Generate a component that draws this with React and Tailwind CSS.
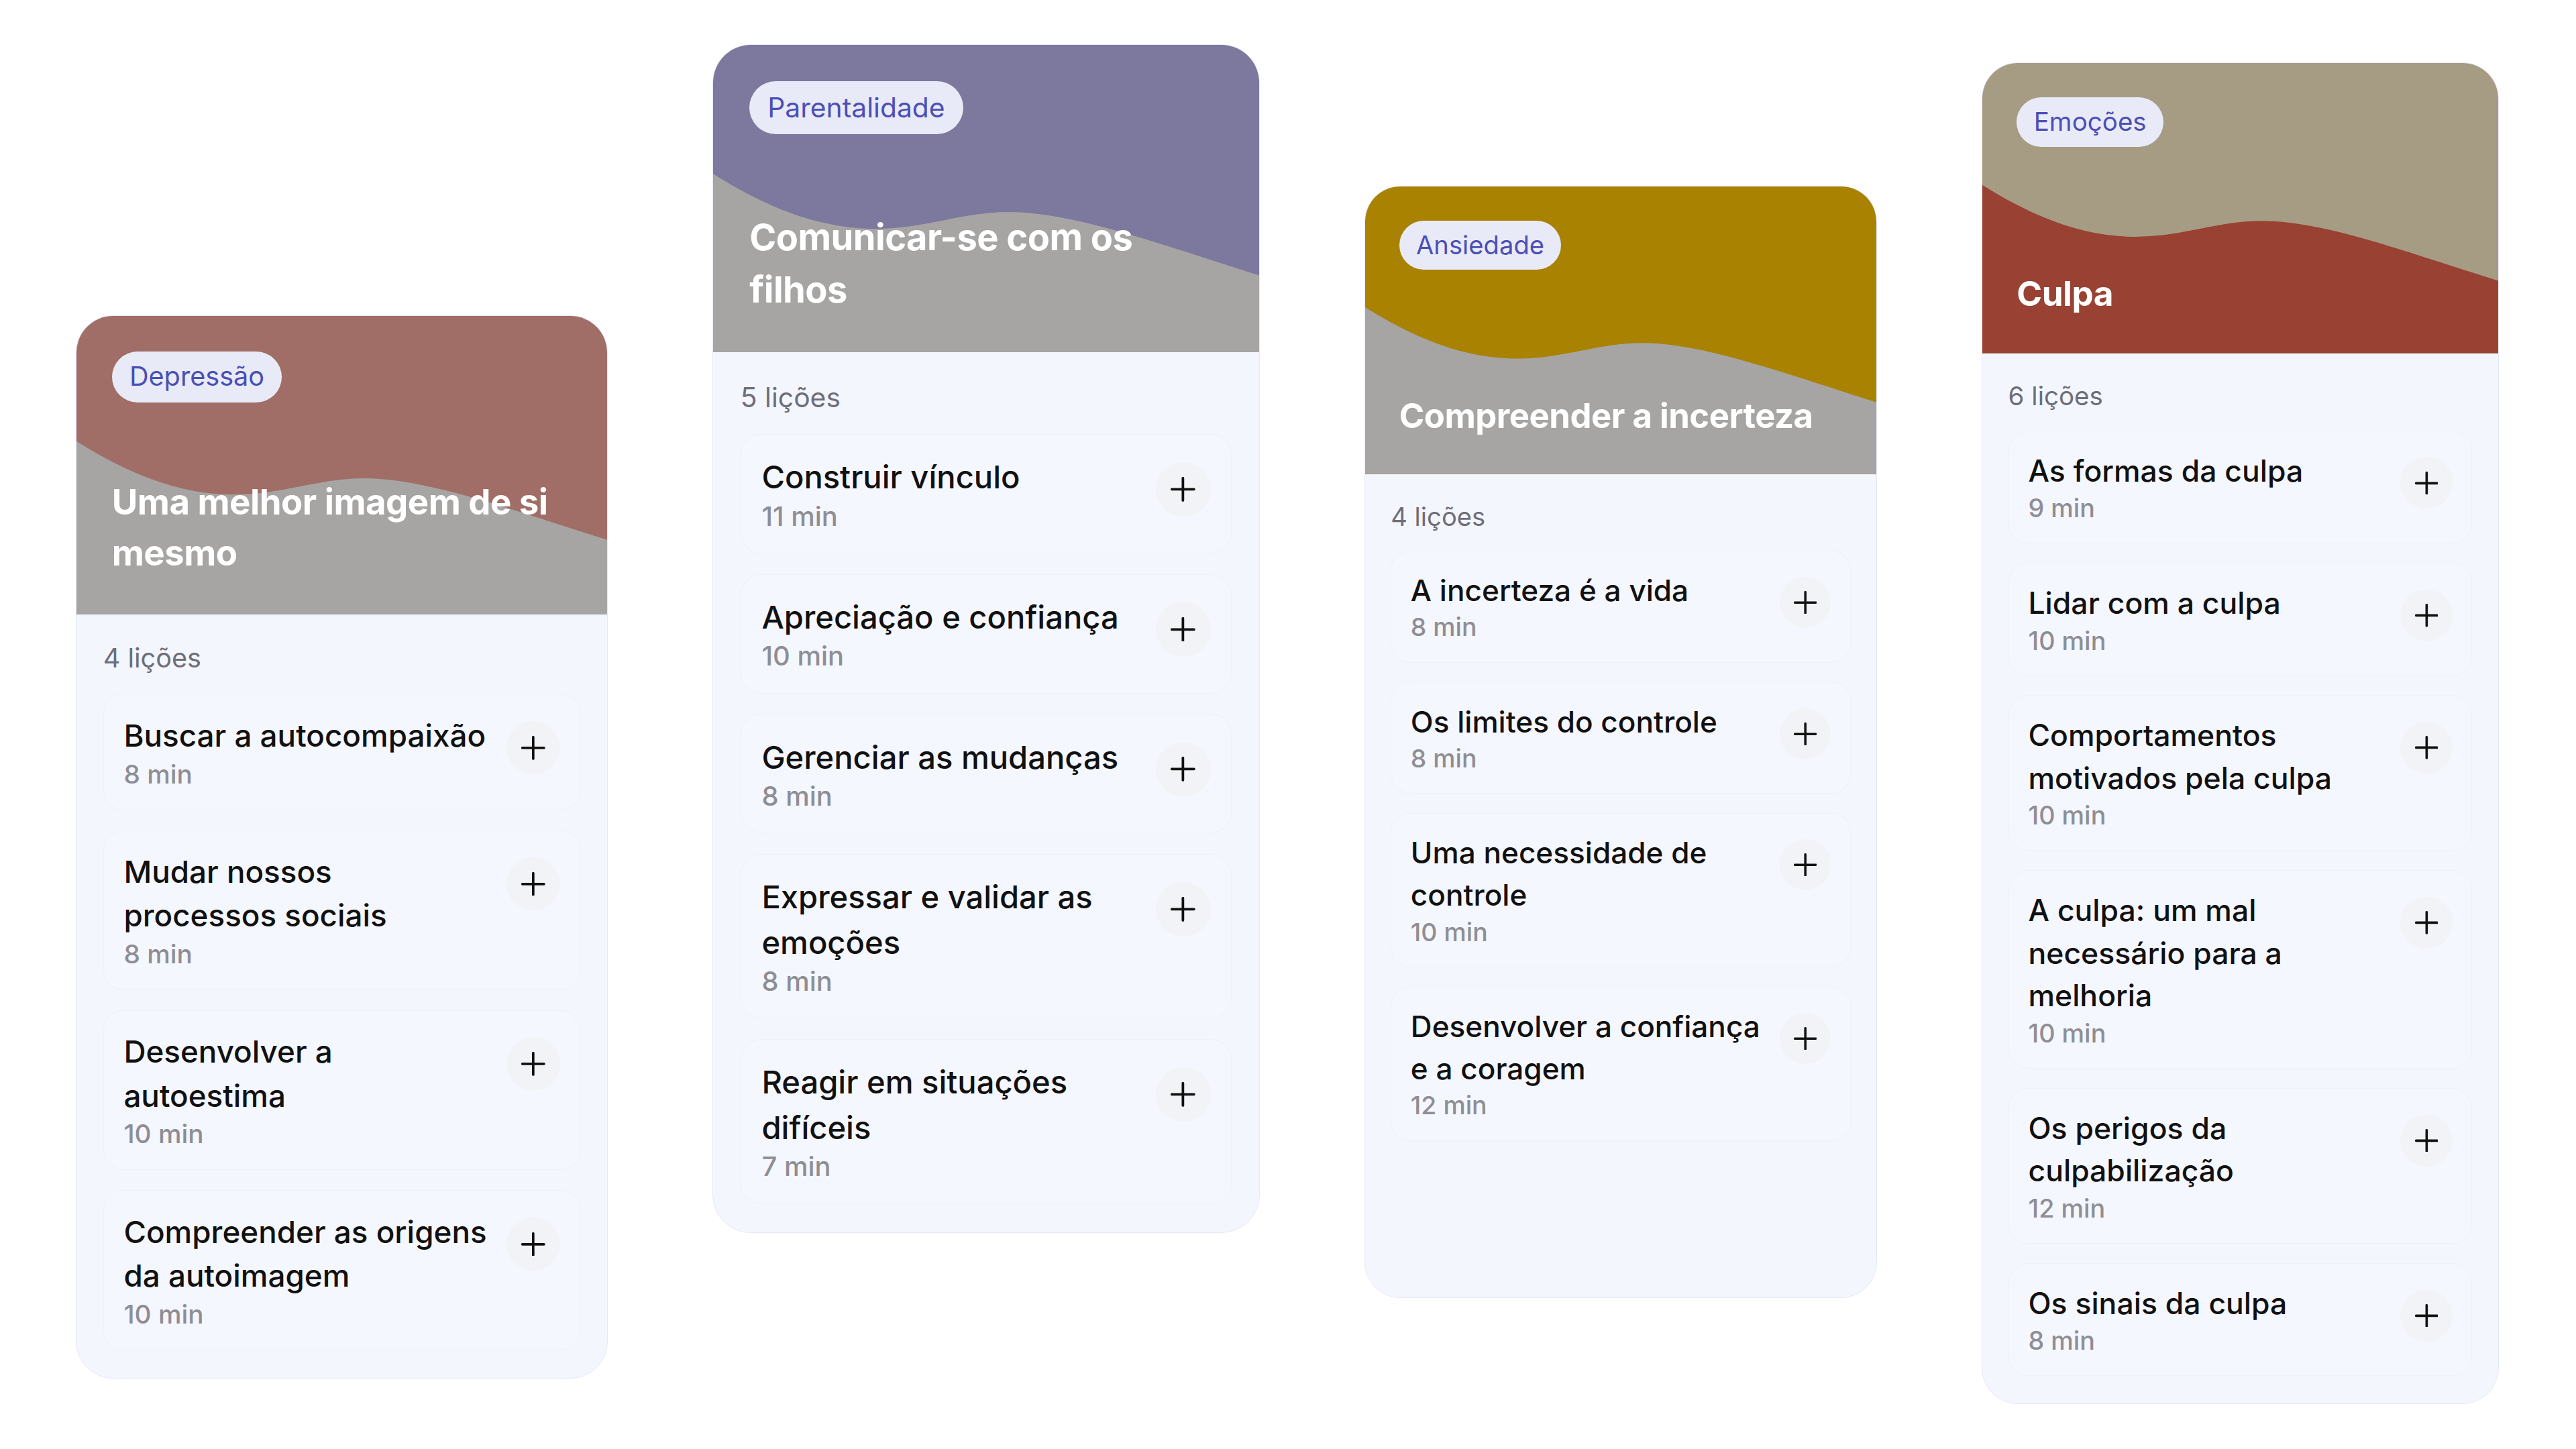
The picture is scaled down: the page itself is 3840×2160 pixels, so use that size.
import React from "react";

const courses = [
  {
    size: "text-[39.65px]",
    offset: "mt-[470px]",
    height: "",
    tag: "Depressão",
    title: ["Uma melhor imagem de si", "mesmo"],
    headerBg: "bg-[#a06e66]",
    wave: "#a6a5a3",
    count: "4 lições",
    lessons: [
      { title: ["Buscar a autocompaixão"], time: "8 min" },
      { title: ["Mudar nossos", "processos sociais"], time: "8 min" },
      { title: ["Desenvolver a", "autoestima"], time: "10 min" },
      { title: ["Compreender as origens", "da autoimagem"], time: "10 min" },
    ],
  },
  {
    size: "text-[40.8px]",
    offset: "mt-[66px]",
    height: "",
    tag: "Parentalidade",
    title: ["Comunicar-se com os", "filhos"],
    headerBg: "bg-[#7c789e]",
    wave: "#a6a5a3",
    count: "5 lições",
    lessons: [
      { title: ["Construir vínculo"], time: "11 min" },
      { title: ["Apreciação e confiança"], time: "10 min" },
      { title: ["Gerenciar as mudanças"], time: "8 min" },
      { title: ["Expressar e validar as", "emoções"], time: "8 min" },
      { title: ["Reagir em situações", "difíceis"], time: "7 min" },
    ],
  },
  {
    size: "text-[38.2px]",
    offset: "mt-[277px]",
    height: "h-[43.4em]",
    tag: "Ansiedade",
    title: ["Compreender a incerteza"],
    headerBg: "bg-[#a88200]",
    wave: "#a6a5a3",
    count: "4 lições",
    lessons: [
      { title: ["A incerteza é a vida"], time: "8 min" },
      { title: ["Os limites do controle"], time: "8 min" },
      { title: ["Uma necessidade de", "controle"], time: "10 min" },
      { title: ["Desenvolver a confiança", "e a coragem"], time: "12 min" },
    ],
  },
  {
    size: "text-[38.55px]",
    offset: "mt-[93px]",
    height: "",
    tag: "Emoções",
    title: ["Culpa"],
    headerBg: "bg-[#a69c84]",
    wave: "#994234",
    count: "6 lições",
    lessons: [
      { title: ["As formas da culpa"], time: "9 min" },
      { title: ["Lidar com a culpa"], time: "10 min" },
      { title: ["Comportamentos", "motivados pela culpa"], time: "10 min" },
      { title: ["A culpa: um mal", "necessário para a", "melhoria"], time: "10 min" },
      { title: ["Os perigos da", "culpabilização"], time: "12 min" },
      { title: ["Os sinais da culpa"], time: "8 min" },
    ],
  },
];

function PlusIcon() {
  return (
    <svg viewBox="0 0 14 14" className="w-[0.9em] h-[0.9em]" fill="none" stroke="#111111" strokeWidth="1.45" strokeLinecap="round">
      <path d="M7 0.7V13.3M0.7 7H13.3" />
    </svg>
  );
}

function Wave({ color }) {
  return (
    <svg className="absolute inset-0 w-full h-full" viewBox="0 0 100 100" preserveAspectRatio="none">
      <path
        d="M0,42 C9,52 18,59 28,59.8 C38,60.5 45,54.5 54,54.4 C66,54.3 82,65 100,75 L100,100 L0,100 Z"
        fill={color}
      />
    </svg>
  );
}

function Lesson({ lesson }) {
  return (
    <div className="flex items-start justify-between rounded-[0.75em] border border-[#eff1f8] bg-[#f5f7fe] px-[0.75em] py-[0.72em]">
      <div className="flex flex-col">
        <div className="text-[1.155em] leading-[1.43] font-medium text-[#111111]">
          {lesson.title.map((line) => (
            <span key={line} className="block whitespace-nowrap">
              {line}
            </span>
          ))}
        </div>
        <div className="text-[0.98em] leading-[1.25] font-medium text-[#8e8e94]">{lesson.time}</div>
      </div>
      <button className="mt-[0.28em] flex h-[2em] w-[2em] shrink-0 items-center justify-center rounded-full bg-[#f2f3f7]">
        <PlusIcon />
      </button>
    </div>
  );
}

function CourseCard({ course }) {
  return (
    <div
      className={`${course.size} ${course.offset} ${course.height} w-[20em] shrink-0 overflow-hidden rounded-[1.4em] border border-[#e6e8f5] bg-[#f4f6fe]`}
    >
      <div className={`relative aspect-video ${course.headerBg}`}>
        <Wave color={course.wave} />
        <div className="relative flex h-full flex-col justify-between p-[1.33em]">
          <div className="self-start rounded-full bg-[#e9eaf7] px-[0.66em] py-[0.21em] text-[1em] leading-[1.5] text-[#4b4fb5]">
            {course.tag}
          </div>
          <div className="text-[1.33em] leading-[1.44] font-bold tracking-[-0.01em] text-white">
            {course.title.map((line) => (
              <span key={line} className="block whitespace-nowrap">
                {line}
              </span>
            ))}
          </div>
        </div>
      </div>
      <div className="flex flex-col px-[1em] pt-[0.97em] pb-[1.05em]">
        <div className="text-[1em] leading-[1.4] text-[#6e6e78]">{course.count}</div>
        <div className="mt-[0.62em] flex flex-col gap-[0.75em]">
          {course.lessons.map((lesson) => (
            <Lesson key={lesson.title.join(" ")} lesson={lesson} />
          ))}
        </div>
      </div>
    </div>
  );
}

export default function App() {
  return (
    <div className="min-h-screen w-full bg-white font-['Inter','Noto_Sans',sans-serif]">
      <div className="flex items-start gap-[156px] px-[113px]">
        {courses.map((course) => (
          <CourseCard key={course.tag} course={course} />
        ))}
      </div>
    </div>
  );
}
